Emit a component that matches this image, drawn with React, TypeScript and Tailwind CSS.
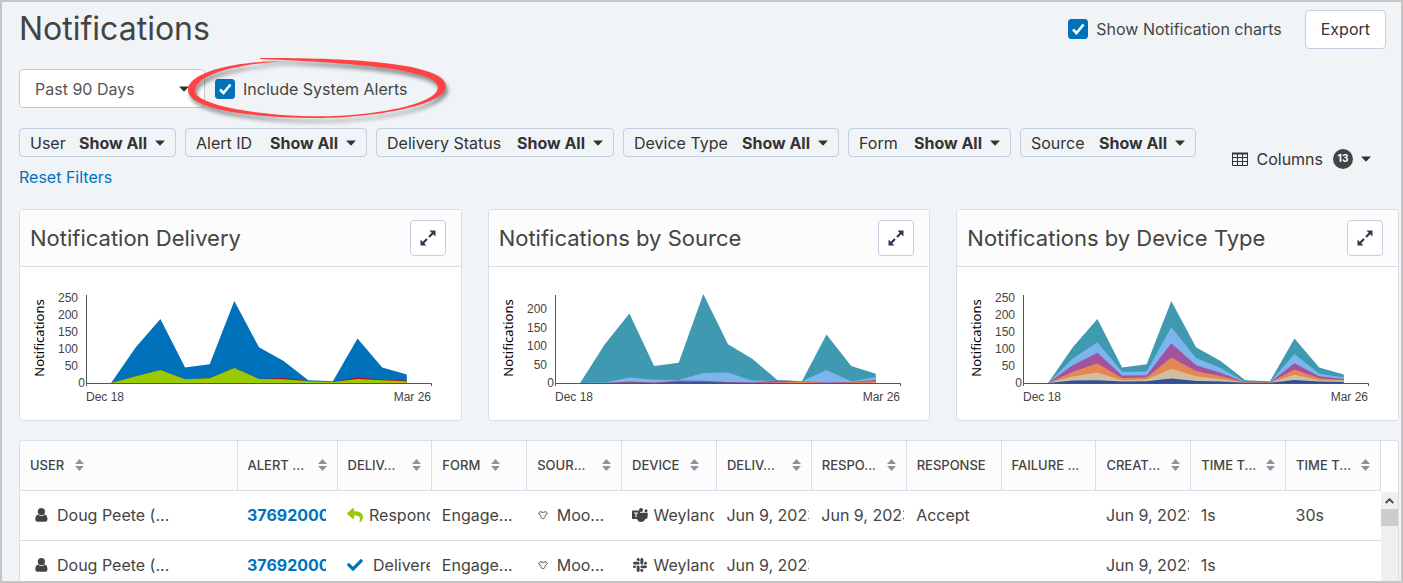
import { useState } from 'react';
import type { ReactNode } from 'react';
import { FaCheck, FaReply, FaSlack } from 'react-icons/fa';

type Series = { color: string; values: number[] };

type ChartConfig = {
  title: string;
  max: number;
  ticks: number[];
  series: Series[];
};

const TOTALS = [0, 105, 188, 46, 55, 241, 105, 65, 8, 5, 131, 46, 25];

// Values are cumulative, the tallest series is painted first
const charts: ChartConfig[] = [
  {
    title: 'Notification Delivery',
    max: 259,
    ticks: [0, 50, 100, 150, 200, 250],
    series: [
      { color: '#0072bc', values: TOTALS },
      { color: '#d0021b', values: [0, 20, 38, 11, 14, 44, 12, 15, 5, 3, 16, 10, 7] },
      { color: '#99cc00', values: [0, 20, 38, 11, 14, 44, 12, 11, 5, 3, 12, 8, 5] },
    ],
  },
  {
    title: 'Notifications by Source',
    max: 238,
    ticks: [0, 50, 100, 150, 200],
    series: [
      { color: '#3f9ab1', values: TOTALS },
      { color: '#7cb5ee', values: [0, 1, 15, 9, 8, 27, 28, 6, 7, 5, 35, 4, 16] },
      { color: '#a3529d', values: [0, 0, 4, 1, 7, 6, 3, 1, 7, 5, 1, 3, 8] },
      { color: '#e58653', values: [0, 0, 1, 0, 2, 1, 1, 0, 1, 4, 0, 1, 5] },
      { color: '#2f4f97', values: [0, 0, 1, 0, 3, 3, 1, 0, 0, 0, 0, 0, 0] },
    ],
  },
  {
    title: 'Notifications by Device Type',
    max: 259,
    ticks: [0, 50, 100, 150, 200, 250],
    series: [
      { color: '#3f9ab1', values: TOTALS },
      { color: '#7cb5ee', values: [0, 72, 120, 32, 34, 164, 74, 44, 3, 3, 85, 27, 16] },
      { color: '#a3529d', values: [0, 52, 89, 22, 23, 117, 52, 30, 2, 2, 58, 20, 12] },
      { color: '#e58653', values: [0, 33, 58, 15, 17, 75, 35, 21, 2, 2, 40, 14, 9] },
      { color: '#cdbf9f', values: [0, 19, 31, 8, 11, 42, 20, 12, 1, 1, 24, 8, 7] },
      { color: '#2f4f97', values: [0, 7, 8, 4, 5, 13, 6, 4, 1, 1, 9, 4, 3] },
    ],
  },
];

const filters = [
  { name: 'User', width: 'min-w-[157px]' },
  { name: 'Alert ID', width: 'min-w-[182px]' },
  { name: 'Delivery Status', width: 'min-w-[238px]' },
  { name: 'Device Type', width: 'min-w-[216px]' },
  { name: 'Form', width: 'min-w-[163px]' },
  { name: 'Source', width: 'min-w-[176px]' },
];

const columns = [
  { label: 'User', sortable: true, compact: true },
  { label: 'Alert ...', sortable: true },
  { label: 'Deliv...', sortable: true },
  { label: 'Form', sortable: true, compact: true },
  { label: 'Sour...', sortable: true },
  { label: 'Device', sortable: true, compact: true },
  { label: 'Deliv...', sortable: true },
  { label: 'Respo...', sortable: true },
  { label: 'Response', sortable: false },
  { label: 'Failure ...', sortable: false },
  { label: 'Creat...', sortable: true },
  { label: 'Time T...', sortable: true },
  { label: 'Time T...', sortable: true },
];

const rows = [
  {
    user: 'Doug Peete (...',
    alertId: '37692000',
    status: 'Respond',
    form: 'Engage...',
    source: 'Moo...',
    device: 'Weyland',
    deviceKind: 'teams',
    delivered: 'Jun 9, 2023',
    responded: 'Jun 9, 2023',
    response: 'Accept',
    created: 'Jun 9, 2023',
    timeToDeliver: '1s',
    timeToRespond: '30s',
  },
  {
    user: 'Doug Peete (...',
    alertId: '37692000',
    status: 'Delivered',
    form: 'Engage...',
    source: 'Moo...',
    device: 'Weyland',
    deviceKind: 'slack',
    delivered: 'Jun 9, 2023',
    responded: '',
    response: '',
    created: 'Jun 9, 2023',
    timeToDeliver: '1s',
    timeToRespond: '',
  },
];

export default function App() {
  const [showCharts, setShowCharts] = useState(true);
  const [includeSystem, setIncludeSystem] = useState(true);

  return (
    <div className="flex h-screen flex-col overflow-hidden border-2 border-[#c5c5c5] bg-[#f0f4f7] pl-[17px] font-['Inter','Liberation_Sans',sans-serif] text-base text-[#444]">
      {/* Header */}
      <header className="flex shrink-0 items-center justify-between pt-[7px] pr-[15px]">
        <h1 className="text-[32px] leading-10">Notifications</h1>
        <div className="flex items-center gap-[23px]">
          <CheckField id="show-charts" label="Show Notification charts" checked={showCharts} onChange={setShowCharts} />
          <button className="h-[39px] rounded border border-[#c3cfe0] bg-white px-[15px] text-[#333]">Export</button>
        </div>
      </header>

      {/* Period */}
      <div className="mt-5 flex shrink-0 items-center gap-[10px]">
        <div className="relative">
          <select
            aria-label="Period"
            className="h-[39px] w-[186px] appearance-none rounded border border-[#c8c8c8] bg-white px-[15px] text-[#555]"
          >
            <option>Past 90 Days</option>
            <option>Past 30 Days</option>
          </select>
          <Caret className="pointer-events-none absolute top-[17px] right-[16px]" />
        </div>
        <div className="relative">
          <CheckField id="include-system" label="Include System Alerts" checked={includeSystem} onChange={setIncludeSystem} />
          <Highlight />
        </div>
      </div>

      {/* Filters */}
      <div className="mt-5 flex shrink-0 items-center justify-between pr-[30px]">
        <div>
          <div className="flex gap-[9px]">
            {filters.map((filter) => (
              <button
                key={filter.name}
                className={`flex h-[29px] items-center rounded border border-[#c3cfe0] px-[10px] whitespace-nowrap text-[#333] ${filter.width}`}
              >
                {filter.name}
                <b className="mr-2 ml-auto font-bold">Show All</b>
                <Caret />
              </button>
            ))}
          </div>
          <a href="#reset" className="mt-2 inline-block leading-6 text-[#0072bc]">
            Reset Filters
          </a>
        </div>
        <button className="flex items-center whitespace-nowrap text-[#333]">
          <GridIcon />
          <span className="mr-[10px] ml-2">Columns</span>
          <span className="mr-2 flex size-5 items-center justify-center rounded-full bg-[#444] text-[10px] font-bold text-white">
            13
          </span>
          <Caret />
        </button>
      </div>

      {/* Charts */}
      {showCharts && (
        <div className="mt-5 mr-0.5 grid shrink-0 grid-cols-3 gap-[26px]">
          {charts.map((chart) => (
            <ChartCard key={chart.title} chart={chart} />
          ))}
        </div>
      )}

      {/* Table */}
      <div className="mt-[19px] mr-0.5 flex min-h-0 flex-1 overflow-hidden rounded-t border border-b-0 border-[#d6dfe9] bg-white">
        <div className="min-w-0 flex-1">
          <table className="w-full table-fixed border-collapse text-left">
            <colgroup>
              <col className="w-[217px]" />
              <col className="w-[100px]" />
            </colgroup>
            <thead>
              <tr className="h-[49px] border-b border-[#d6dfe9] bg-[#fcfcfc]">
                {columns.map((column, i) => (
                  <th key={i} className="border-r border-[#d6dfe9] px-[10px] text-[13px] font-medium whitespace-nowrap uppercase">
                    <div className={`flex items-center ${column.compact ? 'gap-[11px]' : 'justify-between'}`}>
                      {column.label}
                      {column.sortable && <SortIcon />}
                    </div>
                  </th>
                ))}
              </tr>
            </thead>
            <tbody>
              {rows.map((row, i) => (
                <tr key={i} className="h-[50px] border-b border-[#d6dfe9]">
                  <Cell>
                    <span className="flex items-center gap-[9px] pl-[5px]">
                      <UserIcon />
                      {row.user}
                    </span>
                  </Cell>
                  <Cell>
                    <a href="#alert" className="mr-[9px] block overflow-hidden font-bold text-[#0072bc]">
                      {row.alertId}
                    </a>
                  </Cell>
                  <Cell>
                    <span className="flex items-center gap-[6px]">
                      {row.status === 'Respond' ? (
                        <FaReply className="size-4 shrink-0 text-[#99cc00]" />
                      ) : (
                        <FaCheck className="mr-1 size-4 shrink-0 text-[#0072bc]" />
                      )}
                      {row.status}
                    </span>
                  </Cell>
                  <Cell>{row.form}</Cell>
                  <Cell>
                    <span className="flex items-center gap-2">
                      <CowIcon />
                      {row.source}
                    </span>
                  </Cell>
                  <Cell>
                    <span className="flex items-center gap-[6px]">
                      {row.deviceKind === 'teams' ? <TeamsIcon /> : <FaSlack className="size-4 shrink-0" />}
                      {row.device}
                    </span>
                  </Cell>
                  <Cell>{row.delivered}</Cell>
                  <Cell>{row.responded}</Cell>
                  <Cell>{row.response}</Cell>
                  <Cell />
                  <Cell>{row.created}</Cell>
                  <Cell>{row.timeToDeliver}</Cell>
                  <Cell>{row.timeToRespond}</Cell>
                </tr>
              ))}
            </tbody>
          </table>
        </div>
        {/* Scrollbar */}
        <div className="flex w-[17px] shrink-0 flex-col pt-[51px]">
          <div className="flex-1 bg-[#f0f0f0]">
            <div className="flex h-[17px] items-center justify-center">
              <svg width="9" height="6" viewBox="0 0 9 6">
                <path d="M0.7 5 4.5 1.2 8.3 5" fill="none" stroke="#505050" strokeWidth="2" />
              </svg>
            </div>
            <div className="h-[17px] bg-[#cdcdcd]" />
          </div>
        </div>
      </div>
    </div>
  );
}

function CheckField({ id, label, checked, onChange }: { id: string; label: string; checked: boolean; onChange: (value: boolean) => void }) {
  return (
    <div className="flex items-center gap-2 whitespace-nowrap">
      <span className="relative size-5">
        <input
          id={id}
          type="checkbox"
          checked={checked}
          onChange={(e) => onChange(e.target.checked)}
          className="block size-5 appearance-none rounded-[3px] border border-[#0072bc] bg-white checked:bg-[#0072bc]"
        />
        <svg className="pointer-events-none absolute inset-0" width="20" height="20" viewBox="0 0 20 20">
          <path d="M5 10.5 8.5 14 15.5 5.5" fill="none" stroke="#fff" strokeWidth="2.6" />
        </svg>
      </span>
      <label htmlFor={id}>{label}</label>
    </div>
  );
}

function ChartCard({ chart }: { chart: ChartConfig }) {
  return (
    <section className="overflow-hidden rounded border border-[#d6dfe9] bg-white">
      <div className="flex h-[57px] items-center justify-between border-b border-[#d6dfe9] bg-[#fcfcfc] pr-[15px] pl-[10px]">
        <h2 className="text-[22px] leading-7">{chart.title}</h2>
        <button
          aria-label={`Expand ${chart.title}`}
          className="flex size-9 items-center justify-center rounded border border-[#c3cfe0] bg-white text-[#2b3a4e]"
        >
          <ExpandIcon />
        </button>
      </div>
      <AreaChart chart={chart} />
    </section>
  );
}

const LEFT = 66.5;
const BASE = 116;
const PLOT_HEIGHT = 88;
const STEP = 24.64;

function AreaChart({ chart }: { chart: ChartConfig }) {
  const y = (value: number) => BASE - (value / chart.max) * PLOT_HEIGHT;

  const area = (values: number[]) => {
    const points = values.map((value, i) => `${(LEFT + STEP * (i + 1)).toFixed(1)},${y(value).toFixed(1)}`);
    const end = (LEFT + STEP * values.length).toFixed(1);
    return `${points.join(' ')} ${end},${BASE}`;
  };

  return (
    <svg className="block" width="441" height="153" viewBox="0 0 441 153" role="img" aria-label={chart.title}>
      {chart.series.map((item) => (
        <polygon key={item.color} points={area(item.values)} fill={item.color} />
      ))}
      <path d="M66.5 28V119M66 116.5H411.5V119" fill="none" stroke="#555" />
      <g className="font-['Liberation_Sans',Arial,sans-serif] text-[12px]" fill="#444">
        {chart.ticks.map((tick) => (
          <text key={tick} x={tick === 0 ? 65 : 58} y={y(tick) + 4} textAnchor="end">
            {tick}
          </text>
        ))}
        <text x="66" y="134">Dec 18</text>
        <text x="411" y="134" textAnchor="end">Mar 26</text>
      </g>
      <text
        x="-71"
        y="24"
        transform="rotate(-90)"
        textAnchor="middle"
        fill="#000"
        className="font-['Noto_Sans',sans-serif] text-[13px]"
      >
        Notifications
      </text>
    </svg>
  );
}

function Cell({ children }: { children?: ReactNode }) {
  return (
    <td className="overflow-hidden pl-[10px] whitespace-nowrap">
      <div className="mr-[2px] overflow-hidden">{children}</div>
    </td>
  );
}

function Highlight() {
  return (
    <svg
      className="pointer-events-none absolute -top-[23px] -left-[30px] drop-shadow-[2px_4px_2px_rgba(0,0,0,0.45)]"
      width="270"
      height="74"
      viewBox="185 54 270 74"
      aria-hidden="true"
    >
      <path
        d="M260 58C340 57.5 446 62 446 86C446 106 370 118 318 118C250 118 188 109 188 90C188 72 235 60.5 288 61.2C240 63 195 74 195 91C195 105 260 116.3 320 116.3C370 116.3 438 105 438 87C438 71 366 63 260 59Z"
        fill="#ff4343"
      />
    </svg>
  );
}

function Caret({ className = '' }: { className?: string }) {
  return (
    <svg className={className} width="10" height="6" viewBox="0 0 10 6" aria-hidden="true">
      <path d="M0 0.5H10L5 5.8Z" fill="#333" />
    </svg>
  );
}

function SortIcon() {
  return (
    <svg className="shrink-0" width="9" height="12" viewBox="0 0 9 12" aria-hidden="true">
      <path d="M4.5 0 9 5H0ZM0 7H9L4.5 12Z" fill="#8a93a6" />
    </svg>
  );
}

function GridIcon() {
  return (
    <svg width="16" height="14" viewBox="0 0 16 14" aria-hidden="true">
      <path d="M0 1.5H16" stroke="#333" strokeWidth="2" />
      <path d="M0.5 1V13.5H15.5V1M5.5 1V13M10.5 1V13M0 5.5H16M0 9.5H16" fill="none" stroke="#333" />
    </svg>
  );
}

function ExpandIcon() {
  return (
    <svg width="16" height="16" viewBox="0 0 16 16" aria-hidden="true">
      <path d="M9.5 0.5H15.5V6.5ZM0.5 9.5V15.5H6.5Z" fill="currentColor" />
      <path d="M9 7 13 3M3 13 7 9" stroke="currentColor" strokeWidth="2.2" />
    </svg>
  );
}

function UserIcon() {
  return (
    <svg className="shrink-0" width="13" height="14" viewBox="0 0 13 14" fill="#444" aria-hidden="true">
      <path d="M3 6.5C1 7.3 0.3 9 0.3 11.5Q0.3 13.7 2.5 13.7H10.3Q12.5 13.7 12.5 11.5C12.5 9 11.8 7.3 9.8 6.5Q6.4 9.5 3 6.5Z" />
      <circle cx="6.4" cy="3.7" r="3.6" />
    </svg>
  );
}

function TeamsIcon() {
  return (
    <svg className="shrink-0" width="16" height="16" viewBox="0 0 16 16" fill="#444" aria-hidden="true">
      <circle cx="9" cy="3" r="2" />
      <circle cx="14" cy="3.7" r="1.5" />
      <path d="M5 5.800H15.700V9.500Q15.700 12 13.300 12Q12 15 9 15Q6 15 5 12Z" />
      <rect x="0" y="3.500" width="8" height="8.500" rx="0.800" />
      <path d="M2 6H6M4 6V10.300" stroke="#fff" strokeWidth="1.100" />
    </svg>
  );
}

function CowIcon() {
  return (
    <svg className="shrink-0" width="12" height="12" viewBox="0 0 12 12" aria-hidden="true">
      <path
        d="M3.500 2 4.500 3.300H7.500L8.500 2 9 3.600 10.500 4.200 9.300 6 8.300 6.300 7.800 8.700 6 10 4.200 8.700 3.700 6.300 2.700 6 1.500 4.200 3 3.600Z"
        fill="none"
        stroke="#555"
        strokeWidth="0.900"
      />
    </svg>
  );
}
